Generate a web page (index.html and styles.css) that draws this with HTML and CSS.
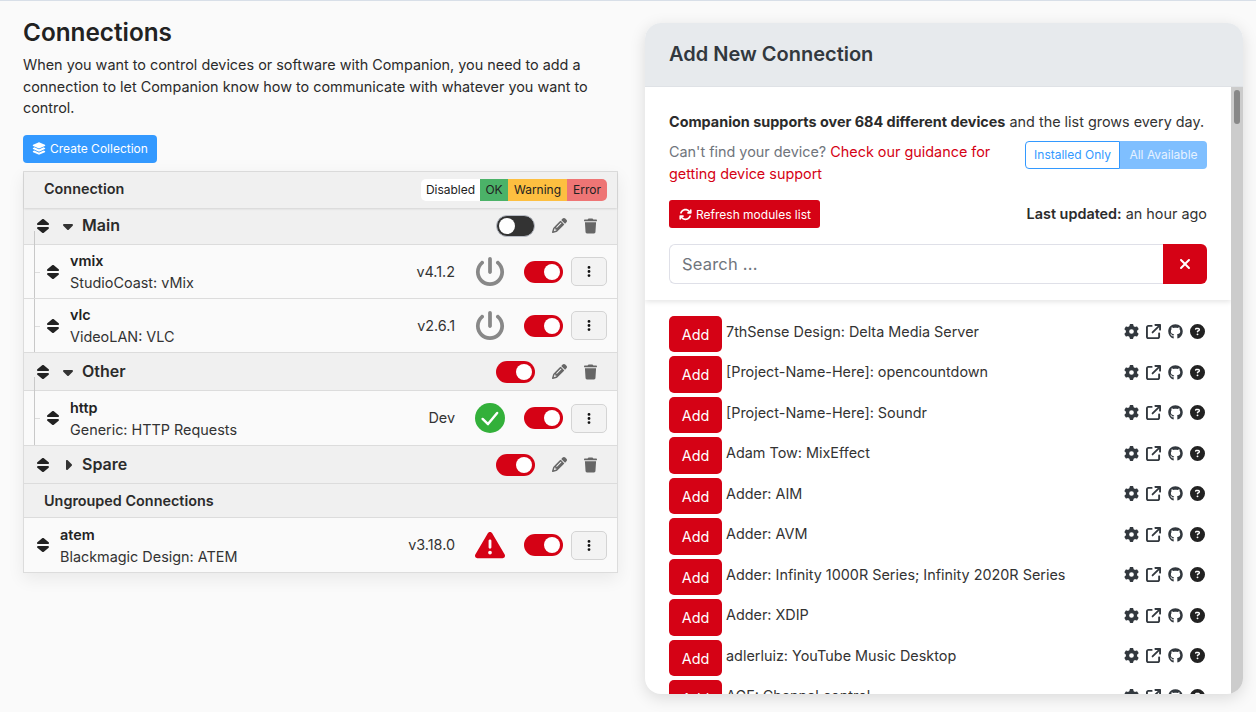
FILE: index.html
```html
<!DOCTYPE html>
<html lang="en">
<head>
  <meta charset="UTF-8">
  <title>Connections</title>
  <link rel="stylesheet" href="styles.css">
</head>
<body>
  <!-- icon sprite, used by every row below -->
  <svg class="sprite" xmlns="http://www.w3.org/2000/svg">
    <symbol id="i-sort" viewBox="0 0 320 512" preserveAspectRatio="none"><path d="M137.4 41.4c12.5-12.5 32.8-12.5 45.3 0l128 128c9.2 9.2 11.9 22.9 6.9 34.9s-16.6 19.8-29.6 19.8H32c-12.9 0-24.6-7.8-29.6-19.8s-2.2-25.7 6.9-34.9l128-128zm0 429.3l-128-128c-9.2-9.2-11.9-22.9-6.9-34.9s16.6-19.8 29.6-19.8H288c12.9 0 24.6 7.8 29.6 19.8s2.2 25.7-6.9 34.9l-128 128c-12.5 12.5-32.8 12.5-45.3 0z"/></symbol>
    <symbol id="i-down" viewBox="0 0 320 512"><path d="M137.4 374.6c12.5 12.5 32.8 12.5 45.3 0l128-128c9.2-9.2 11.9-22.9 6.9-34.9s-16.6-19.8-29.6-19.8L32 192c-12.9 0-24.6 7.8-29.6 19.8s-2.2 25.7 6.9 34.9l128 128z"/></symbol>
    <symbol id="i-right" viewBox="0 0 256 512"><path d="M246.6 278.6c12.5-12.5 12.5-32.8 0-45.3l-128-128c-9.2-9.2-22.9-11.9-34.9-6.9s-19.8 16.6-19.8 29.6l0 256c0 12.9 7.8 24.6 19.8 29.6s25.7 2.2 34.9-6.9l128-128z"/></symbol>
    <symbol id="i-pencil" viewBox="0 0 512 512"><path d="M410.3 231l11.3-11.3-33.9-33.9-62.1-62.1L291.7 89.8l-11.3 11.3-22.6 22.6L58.6 322.9c-10.4 10.4-18 23.3-22.2 37.4L1 480.7c-2.5 8.4-.2 17.5 6.1 23.7s15.3 8.5 23.7 6.1l120.3-35.4c14.1-4.2 27-11.8 37.4-22.2L387.7 253.7 410.3 231zM160 399.4l-9.1 22.7c-4 3.1-8.5 5.4-13.3 6.9L59.4 452l23-78.1c1.4-4.9 3.8-9.4 6.9-13.3l22.7-9.1v32c0 8.8 7.2 16 16 16h32zM362.7 18.7L348.3 33.2 325.7 55.8 314.3 67.1l33.9 33.9 62.1 62.1 33.9 33.9 11.3-11.3 22.6-22.6 14.5-14.5c25-25 25-65.5 0-90.5L453.3 18.7c-25-25-65.5-25-90.5 0zm-47.4 168l-144 144c-6.2 6.2-16.4 6.2-22.6 0s-6.2-16.4 0-22.6l144-144c6.2-6.2 16.4-6.2 22.6 0s6.2 16.4 0 22.6z"/></symbol>
    <symbol id="i-trash" viewBox="0 0 448 512"><path d="M135.2 17.7L128 32H32C14.3 32 0 46.3 0 64S14.3 96 32 96H416c17.7 0 32-14.3 32-32s-14.3-32-32-32H320l-7.2-14.3C307.4 6.8 296.3 0 284.2 0H163.8c-12.1 0-23.2 6.8-28.6 17.7zM416 128H32L53.2 467c1.6 25.3 22.6 45 47.9 45H346.9c25.3 0 46.3-19.7 47.9-45L416 128z"/></symbol>
    <symbol id="i-dots" viewBox="0 0 128 512"><path d="M64 360a56 56 0 1 0 0 112 56 56 0 1 0 0-112zm0-160a56 56 0 1 0 0 112 56 56 0 1 0 0-112zM120 96A56 56 0 1 0 8 96a56 56 0 1 0 112 0z"/></symbol>
    <symbol id="i-power" viewBox="0 0 512 512"><path d="M288 32c0-17.7-14.3-32-32-32s-32 14.3-32 32V256c0 17.7 14.3 32 32 32s32-14.3 32-32V32zM143.5 120.6c13.6-11.3 15.4-31.5 4.1-45.1s-31.5-15.4-45.1-4.1C49.7 115.4 16 181.8 16 256c0 132.5 107.5 240 240 240s240-107.5 240-240c0-74.2-33.8-140.6-86.6-184.6c-13.6-11.3-33.8-9.4-45.1 4.1s-9.4 33.8 4.1 45.1c38.9 32.3 63.5 81 63.5 135.4c0 97.2-78.8 176-176 176s-176-78.8-176-176c0-54.4 24.7-103.1 63.5-135.4z"/></symbol>
    <symbol id="i-check" viewBox="0 0 512 512"><circle cx="256" cy="256" r="256"/><path d="M130 272L222 360L378 170" fill="none" stroke="#fff" stroke-width="42" stroke-linecap="round" stroke-linejoin="round"/></symbol>
    <symbol id="i-warn" viewBox="0 0 512 512"><path d="M256 32c14.2 0 27.3 7.5 34.5 19.8l216 368c7.3 12.4 7.3 27.7 .2 40.1S486.3 480 472 480H40c-14.3 0-27.6-7.7-34.7-20.1s-7-27.8 .2-40.1l216-368C228.7 39.5 241.8 32 256 32zm0 128c-13.3 0-24 10.7-24 24V296c0 13.3 10.7 24 24 24s24-10.7 24-24V184c0-13.3-10.7-24-24-24zm32 224a32 32 0 1 0 -64 0 32 32 0 1 0 64 0z"/></symbol>
    <symbol id="i-gear" viewBox="0 0 512 512"><path d="M495.9 166.6c3.2 8.7 .5 18.4-6.4 24.6l-43.3 39.4c1.1 8.3 1.7 16.8 1.7 25.4s-.6 17.1-1.7 25.4l43.3 39.4c6.9 6.2 9.6 15.9 6.4 24.6c-4.4 11.9-9.7 23.3-15.8 34.3l-4.7 8.1c-6.6 11-14 21.4-22.1 31.2c-5.9 7.2-15.7 9.6-24.5 6.8l-55.7-17.7c-13.4 10.3-28.2 18.9-44 25.4l-12.5 57.1c-2 9.1-9 16.3-18.2 17.8c-13.8 2.3-28 3.5-42.5 3.5s-28.7-1.2-42.5-3.5c-9.2-1.5-16.2-8.7-18.2-17.8l-12.5-57.1c-15.8-6.5-30.6-15.1-44-25.4L83.1 425.9c-8.8 2.8-18.6 .3-24.5-6.8c-8.1-9.8-15.5-20.2-22.1-31.2l-4.7-8.1c-6.1-11-11.4-22.4-15.8-34.3c-3.2-8.7-.5-18.4 6.4-24.6l43.3-39.4C64.6 273.1 64 264.6 64 256s.6-17.1 1.7-25.4L22.4 191.2c-6.9-6.2-9.6-15.9-6.4-24.6c4.4-11.9 9.7-23.3 15.8-34.3l4.7-8.1c6.6-11 14-21.4 22.1-31.2c5.9-7.2 15.7-9.6 24.5-6.8l55.7 17.7c13.4-10.3 28.2-18.9 44-25.4l12.5-57.1c2-9.1 9-16.3 18.2-17.8C227.3 1.2 241.5 0 256 0s28.7 1.2 42.5 3.5c9.2 1.5 16.2 8.7 18.2 17.8l12.5 57.1c15.8 6.5 30.6 15.1 44 25.4l55.7-17.7c8.8-2.8 18.6-.3 24.5 6.8c8.1 9.8 15.5 20.2 22.1 31.2l4.7 8.1c6.1 11 11.4 22.4 15.8 34.3zM256 336a80 80 0 1 0 0-160 80 80 0 1 0 0 160z"/></symbol>
    <symbol id="i-link" viewBox="0 0 512 512"><path d="M320 0c-17.7 0-32 14.3-32 32s14.3 32 32 32h82.7L201.4 265.4c-12.5 12.5-12.5 32.8 0 45.3s32.8 12.5 45.3 0L448 109.3V192c0 17.7 14.3 32 32 32s32-14.3 32-32V32c0-17.7-14.3-32-32-32H320zM80 32C35.8 32 0 67.8 0 112V432c0 44.2 35.8 80 80 80H400c44.2 0 80-35.8 80-80V320c0-17.7-14.3-32-32-32s-32 14.3-32 32V432c0 8.8-7.2 16-16 16H80c-8.8 0-16-7.2-16-16V112c0-8.8 7.2-16 16-16H192c17.7 0 32-14.3 32-32s-14.3-32-32-32H80z"/></symbol>
    <symbol id="i-github" viewBox="0 0 496 512"><path d="M244.8 8C106.1 8 0 113.3 0 252c0 110.9 69.8 205.8 169.5 239.2 12.8 2.3 17.3-5.6 17.3-12.1 0-6.2-.3-40.4-.3-61.4 0 0-70 15-84.7-29.8 0 0-11.4-29.1-27.8-36.6 0 0-22.9-15.7 1.6-15.4 0 0 24.9 2 38.6 25.8 21.9 38.6 58.6 27.5 72.9 20.9 2.3-16 8.8-27.1 16-33.7-55.9-6.2-112.3-14.3-112.3-110.5 0-27.5 7.6-41.3 23.6-58.9-2.6-6.5-11.1-33.3 2.6-67.9 20.9-6.5 69 27 69 27 20-5.6 41.5-8.5 62.8-8.5s42.8 2.9 62.8 8.5c0 0 48.1-33.6 69-27 13.7 34.7 5.2 61.4 2.6 67.9 16 17.7 25.8 31.5 25.8 58.9 0 96.5-58.9 104.2-114.8 110.5 9.2 7.9 17 22.9 17 46.4 0 33.7-.3 75.4-.3 83.6 0 6.5 4.6 14.4 17.3 12.1C428.2 457.8 496 362.9 496 252 496 113.3 383.5 8 244.8 8z"/></symbol>
    <symbol id="i-help" viewBox="0 0 512 512"><path d="M256 512A256 256 0 1 0 256 0a256 256 0 1 0 0 512zM169.8 165.3c7.9-22.3 29.1-37.3 52.8-37.3h58.3c34.9 0 63.1 28.3 63.1 63.1c0 22.6-12.1 43.5-31.7 54.8L280 264.4c-.2 13-10.9 23.6-24 23.6c-13.3 0-24-10.7-24-24V250.5c0-8.6 4.6-16.5 12.1-20.8l44.3-25.4c4.7-2.7 7.6-7.7 7.6-13.1c0-8.4-6.8-15.1-15.1-15.1H222.6c-3.4 0-6.4 2.1-7.5 5.3l-.4 1.2c-4.4 12.5-18.2 19-30.6 14.6s-19-18.2-14.6-30.6l.4-1.2zM224 352a32 32 0 1 1 64 0 32 32 0 1 1 -64 0z"/></symbol>
    <symbol id="i-layers" viewBox="0 0 576 512"><path d="M264.5 5.2c14.9-6.9 32.1-6.9 47 0l218.6 101c8.5 3.9 13.9 12.4 13.9 21.8s-5.4 17.9-13.9 21.8l-218.6 101c-14.9 6.9-32.1 6.9-47 0L45.9 149.8C37.4 145.8 32 137.3 32 128s5.4-17.9 13.9-21.8L264.5 5.2zM476.9 209.6l53.2 24.6c8.5 3.9 13.9 12.4 13.9 21.8s-5.4 17.9-13.9 21.8l-218.6 101c-14.9 6.9-32.1 6.9-47 0L45.9 277.8C37.4 273.8 32 265.3 32 256s5.4-17.9 13.9-21.8l53.2-24.6 152 70.2c23.4 10.8 50.4 10.8 73.8 0l152-70.2zm-152 198.2l152-70.2 53.2 24.6c8.5 3.9 13.9 12.4 13.9 21.8s-5.4 17.9-13.9 21.8l-218.6 101c-14.9 6.9-32.1 6.9-47 0L45.9 405.8C37.4 401.8 32 393.3 32 384s5.4-17.9 13.9-21.8l53.2-24.6 152 70.2c23.4 10.8 50.4 10.8 73.8 0z"/></symbol>
    <symbol id="i-rotate" viewBox="0 0 512 512"><path d="M105.1 202.6c7.7-21.8 20.2-42.3 37.8-59.8c62.5-62.5 163.8-62.5 226.3 0L386.3 160H352c-17.7 0-32 14.3-32 32s14.3 32 32 32H463.5c0 0 0 0 0 0h.4c17.7 0 32-14.3 32-32V80c0-17.7-14.3-32-32-32s-32 14.3-32 32v35.2L414.4 97.6c-87.5-87.5-229.3-87.5-316.8 0C73.2 122 55.6 150.7 44.8 181.4c-5.9 16.7 2.9 34.9 19.5 40.8s34.9-2.9 40.8-19.5zM39 289.3c-5 1.5-9.8 4.2-13.7 8.2c-4 4-6.7 8.8-8.1 14c-.3 1.2-.6 2.5-.8 3.8c-.3 1.7-.4 3.4-.4 5.1V432c0 17.7 14.3 32 32 32s32-14.3 32-32V396.9l17.6 17.5 0 0c87.5 87.4 229.3 87.4 316.7 0c24.4-24.4 42.1-53.1 52.9-83.7c5.9-16.7-2.9-34.9-19.5-40.8s-34.9 2.9-40.8 19.5c-7.7 21.8-20.2 42.3-37.8 59.8c-62.5 62.5-163.8 62.5-226.3 0l-.1-.1L125.6 352H160c17.7 0 32-14.3 32-32s-14.3-32-32-32H48.4c-1.6 0-3.2 .1-4.8 .3s-3.1 .5-4.6 1z"/></symbol>
    <symbol id="i-x" viewBox="0 0 384 512"><path d="M342.6 150.6c12.5-12.5 12.5-32.8 0-45.3s-32.8-12.5-45.3 0L192 210.7 86.6 105.4c-12.5-12.5-32.8-12.5-45.3 0s-12.5 32.8 0 45.3L146.7 256 41.4 361.4c-12.5 12.5-12.5 32.8 0 45.3s32.8 12.5 45.3 0L192 301.3 297.4 406.6c12.5 12.5 32.8 12.5 45.3 0s12.5-32.8 0-45.3L237.3 256 342.6 150.6z"/></symbol>
  </svg>

  <div class="page">
    <main class="left">
      <h1>Connections</h1>
      <p class="intro">When you want to control devices or software with Companion, you need to add a connection to let Companion know how to communicate with whatever you want to control.</p>
      <button class="btn-create"><svg class="ic-layers"><use href="#i-layers"/></svg>Create Collection</button>

      <div class="table">
        <div class="table-head">
          <span>Connection</span>
          <div class="legend">
            <span class="lg-off">Disabled</span><span class="lg-ok">OK</span><span class="lg-warn">Warning</span><span class="lg-err">Error</span>
          </div>
        </div>

        <div class="group-row first">
          <svg class="ic-sort"><use href="#i-sort"/></svg>
          <svg class="ic-caret"><use href="#i-down"/></svg>
          <span class="group-name">Main</span>
          <span class="switch off"></span>
          <svg class="ic-edit"><use href="#i-pencil"/></svg>
          <svg class="ic-trash"><use href="#i-trash"/></svg>
        </div>
        <div class="group-items">
          <div class="item-row">
            <svg class="ic-sort"><use href="#i-sort"/></svg>
            <div class="item-text"><b>vmix</b><span>StudioCoast: vMix</span></div>
            <span class="version">v4.1.2</span>
            <svg class="ic-status grey"><use href="#i-power"/></svg>
            <span class="switch"></span>
            <button class="btn-more"><svg><use href="#i-dots"/></svg></button>
          </div>
          <div class="item-row">
            <svg class="ic-sort"><use href="#i-sort"/></svg>
            <div class="item-text"><b>vlc</b><span>VideoLAN: VLC</span></div>
            <span class="version">v2.6.1</span>
            <svg class="ic-status grey"><use href="#i-power"/></svg>
            <span class="switch"></span>
            <button class="btn-more"><svg><use href="#i-dots"/></svg></button>
          </div>
        </div>

        <div class="group-row">
          <svg class="ic-sort"><use href="#i-sort"/></svg>
          <svg class="ic-caret"><use href="#i-down"/></svg>
          <span class="group-name">Other</span>
          <span class="switch"></span>
          <svg class="ic-edit"><use href="#i-pencil"/></svg>
          <svg class="ic-trash"><use href="#i-trash"/></svg>
        </div>
        <div class="group-items">
          <div class="item-row tall">
            <svg class="ic-sort"><use href="#i-sort"/></svg>
            <div class="item-text"><b>http</b><span>Generic: HTTP Requests</span></div>
            <span class="version">Dev</span>
            <svg class="ic-status green"><use href="#i-check"/></svg>
            <span class="switch"></span>
            <button class="btn-more"><svg><use href="#i-dots"/></svg></button>
          </div>
        </div>

        <div class="group-row">
          <svg class="ic-sort"><use href="#i-sort"/></svg>
          <svg class="ic-caret closed"><use href="#i-right"/></svg>
          <span class="group-name">Spare</span>
          <span class="switch"></span>
          <svg class="ic-edit"><use href="#i-pencil"/></svg>
          <svg class="ic-trash"><use href="#i-trash"/></svg>
        </div>

        <div class="ungrouped">Ungrouped Connections</div>
        <div class="item-row flat">
          <svg class="ic-sort"><use href="#i-sort"/></svg>
          <div class="item-text"><b>atem</b><span>Blackmagic Design: ATEM</span></div>
          <span class="version">v3.18.0</span>
          <svg class="ic-status red"><use href="#i-warn"/></svg>
          <span class="switch"></span>
          <button class="btn-more"><svg><use href="#i-dots"/></svg></button>
        </div>
      </div>
    </main>

    <aside class="panel">
      <div class="panel-head">Add New Connection</div>
      <div class="panel-body">
        <div class="panel-scroll">
          <div class="panel-top">
            <p class="supports"><b>Companion supports over 684 different devices</b> and the list grows every day.</p>
            <div class="find-row">
              <p class="find">Can't find your device? <a href="#">Check our guidance for getting device support</a></p>
              <div class="filter">
                <span class="filter-on">Installed Only</span><span class="filter-off">All Available</span>
              </div>
            </div>
            <div class="refresh-row">
              <button class="btn-refresh"><svg><use href="#i-rotate"/></svg>Refresh modules list</button>
              <span><b>Last updated:</b> an hour ago</span>
            </div>
            <div class="search">
              <input type="text" placeholder="Search ...">
              <button><svg><use href="#i-x"/></svg></button>
            </div>
          </div>

          <ul class="modules">
            <li><button>Add</button><span class="mod-name">7thSense Design: Delta Media Server</span><span class="mod-icons"><svg class="gear"><use href="#i-gear"/></svg><svg><use href="#i-link"/></svg><svg><use href="#i-github"/></svg><svg><use href="#i-help"/></svg></span></li>
            <li><button>Add</button><span class="mod-name">[Project-Name-Here]: opencountdown</span><span class="mod-icons"><svg class="gear"><use href="#i-gear"/></svg><svg><use href="#i-link"/></svg><svg><use href="#i-github"/></svg><svg><use href="#i-help"/></svg></span></li>
            <li><button>Add</button><span class="mod-name">[Project-Name-Here]: Soundr</span><span class="mod-icons"><svg class="gear"><use href="#i-gear"/></svg><svg><use href="#i-link"/></svg><svg><use href="#i-github"/></svg><svg><use href="#i-help"/></svg></span></li>
            <li><button>Add</button><span class="mod-name">Adam Tow: MixEffect</span><span class="mod-icons"><svg class="gear"><use href="#i-gear"/></svg><svg><use href="#i-link"/></svg><svg><use href="#i-github"/></svg><svg><use href="#i-help"/></svg></span></li>
            <li><button>Add</button><span class="mod-name">Adder: AIM</span><span class="mod-icons"><svg class="gear"><use href="#i-gear"/></svg><svg><use href="#i-link"/></svg><svg><use href="#i-github"/></svg><svg><use href="#i-help"/></svg></span></li>
            <li><button>Add</button><span class="mod-name">Adder: AVM</span><span class="mod-icons"><svg class="gear"><use href="#i-gear"/></svg><svg><use href="#i-link"/></svg><svg><use href="#i-github"/></svg><svg><use href="#i-help"/></svg></span></li>
            <li><button>Add</button><span class="mod-name">Adder: Infinity 1000R Series; Infinity 2020R Series</span><span class="mod-icons"><svg class="gear"><use href="#i-gear"/></svg><svg><use href="#i-link"/></svg><svg><use href="#i-github"/></svg><svg><use href="#i-help"/></svg></span></li>
            <li><button>Add</button><span class="mod-name">Adder: XDIP</span><span class="mod-icons"><svg class="gear"><use href="#i-gear"/></svg><svg><use href="#i-link"/></svg><svg><use href="#i-github"/></svg><svg><use href="#i-help"/></svg></span></li>
            <li><button>Add</button><span class="mod-name">adlerluiz: YouTube Music Desktop</span><span class="mod-icons"><svg class="gear"><use href="#i-gear"/></svg><svg><use href="#i-link"/></svg><svg><use href="#i-github"/></svg><svg><use href="#i-help"/></svg></span></li>
            <li><button>Add</button><span class="mod-name">AGF: Channel control</span><span class="mod-icons"><svg class="gear"><use href="#i-gear"/></svg><svg><use href="#i-link"/></svg><svg><use href="#i-github"/></svg><svg><use href="#i-help"/></svg></span></li>
          </ul>
        </div>
        <div class="scrollbar"><div class="scrollbar-thumb"></div></div>
      </div>
    </aside>
  </div>
</body>
</html>
```

FILE: styles.css
```css
* {
  box-sizing: border-box;
}
html, body {
  height: 100%;
}
body {
  margin: 0;
  font-family: Inter, "Liberation Sans", sans-serif;
  font-size: 14.4px;
  line-height: 1.5;
  color: #2b2b2b;
  background-color: #fafafa;
  border-top: 1px solid #d8dfe8;
  overflow: hidden;
}
svg {
  fill: currentColor;
  display: block;
  flex: none;
}
button {
  font-family: inherit;
  cursor: pointer;
}
.sprite {
  display: none;
}
.page {
  display: grid;
  grid-template-columns: 595px 598px;
  column-gap: 27px;
  padding: 22px 13px 17px 23px;
  height: 711px;
}

/* left column */
h1 {
  margin: 0 0 12px;
  font-size: 24.3px;
  line-height: 18px;
  font-weight: 600;
  color: #222;
}
.intro {
  margin: 0 0 16.2px;
  padding-top: 1px;
}
.btn-create {
  display: flex;
  align-items: center;
  gap: 4px;
  height: 28px;
  padding: 0 9px 2px;
  background-color: #39f;
  color: #fff;
  border: none;
  border-radius: 4px;
  font-size: 12px;
}
.ic-layers {
  width: 14px;
  height: 13px;
}
.table {
  margin-top: 8px;
  border: 1px solid #dcdcdc;
  box-shadow: 0 6px 16px rgba(0, 0, 0, 0.07);
  background-color: #fafafa;
}
.table-head {
  display: flex;
  align-items: center;
  justify-content: space-between;
  height: 36px;
  padding: 0 10px 0 20px;
  background-color: #f0f0f0;
  font-weight: 600;
  box-shadow: 0 1px 2px rgba(0, 0, 0, 0.12);
  position: relative;
}
.table-head > span {
  margin-bottom: 2px;
}
.legend {
  display: flex;
  height: 22px;
  border-radius: 5px;
  overflow: hidden;
  font-size: 12px;
  font-weight: 400;
  line-height: 22px;
  text-align: center;
  color: #222;
}
.lg-off { width: 59px; background-color: #fff; }
.lg-ok { width: 28px; background-color: #4bb268; }
.lg-warn { width: 59px; background-color: #fdbf40; }
.lg-err { width: 40px; background-color: #ee7575; }

.group-row {
  display: flex;
  align-items: center;
  height: 38px;
  padding: 0 20px 0 13px;
  background-color: #f0f0f0;
  border-bottom: 1px solid #dcdcdc;
}
.group-row.first {
  height: 37px;
  padding-bottom: 1px;
}
.ic-sort {
  width: 12px;
  height: 16px;
  color: #222;
}
.ic-caret {
  width: 10px;
  height: 16px;
  margin-left: 14px;
  color: #333;
}
.ic-caret.closed {
  width: 8px;
  margin-left: 15px;
  margin-right: 1px;
}
.group-name {
  margin-left: 9px;
  margin-bottom: 2px;
  font-size: 16px;
  font-weight: 600;
  flex: 1;
}
.ic-edit {
  width: 15px;
  height: 15px;
  margin-left: 17px;
  color: #666;
}
.ic-trash {
  width: 13px;
  height: 16px;
  margin-left: 17px;
  color: #666;
}

.switch {
  display: block;
  position: relative;
  width: 39px;
  height: 22px;
  border-radius: 11px;
  background-color: #d50215;
  flex: none;
}
.switch::after {
  content: "";
  position: absolute;
  top: 3px;
  right: 3px;
  width: 16px;
  height: 16px;
  border-radius: 50%;
  background-color: #fff;
}
.switch.off {
  background-color: #333;
  border: 1px solid #b9bdc6;
}
.switch.off::after {
  top: 2px;
  left: 2px;
  right: auto;
}

.group-items {
  position: relative;
}
/* tree line down the side of a group */
.group-items::before {
  content: "";
  position: absolute;
  left: 10px;
  top: -14px;
  bottom: 0;
  width: 1px;
  background-color: #c8c8c8;
}
.item-row {
  display: flex;
  align-items: center;
  height: 54px;
  padding: 0 10px 0 23px;
  border-bottom: 1px solid #dcdcdc;
  position: relative;
}
.group-items .item-row::before {
  content: "";
  position: absolute;
  left: 11px;
  top: 50%;
  width: 5px;
  height: 1px;
  background-color: #ddd;
}
.item-row.tall {
  height: 55px;
}
.item-row.flat {
  padding-left: 13px;
  border-bottom: none;
}
.item-text {
  flex: 1;
  margin-left: 11px;
  padding-top: 1px;
}
.item-text b {
  display: block;
  font-weight: 600;
  color: #222;
}
.item-text span {
  display: block;
  color: #333;
}
.version {
  color: #333;
}
.ic-status {
  width: 30px;
  height: 30px;
  margin: 0 19px 0 20px;
}
.grey { color: #888; }
.green { color: #33b03a; }
.red { color: #d50215; }
.btn-more {
  display: flex;
  align-items: center;
  justify-content: center;
  width: 36px;
  height: 29px;
  margin-left: 8px;
  padding: 0;
  color: #111;
  background-color: #f3f3f3;
  border: 1px solid #d4d4d4;
  border-radius: 5px;
}
.btn-more svg {
  width: 4px;
  height: 13px;
}
.ungrouped {
  display: flex;
  align-items: center;
  height: 34px;
  padding-left: 20px;
  font-weight: 600;
  background-color: #f0f0f0;
  border-bottom: 1px solid #dcdcdc;
}

/* right panel */
.panel {
  display: flex;
  flex-direction: column;
  height: 671px;
  border-radius: 16px;
  overflow: hidden;
  background-color: #fff;
  box-shadow: 0 4px 16px rgba(0, 0, 0, 0.13);
}
.panel-head {
  flex: none;
  height: 64px;
  padding: 0 24px 2px;
  display: flex;
  align-items: center;
  font-size: 20px;
  font-weight: 600;
  color: #32383e;
  background-color: #e7eaed;
  border-bottom: 1px solid #dfe2e6;
}
.panel-body {
  flex: 1;
  display: flex;
  min-height: 0;
}
.panel-scroll {
  flex: 1;
  min-width: 0;
  overflow: hidden;
}
.scrollbar {
  flex: none;
  width: 12px;
  padding: 3px;
  background-color: #ccc;
}
.scrollbar-thumb {
  height: 34px;
  border-radius: 3px;
  background-color: #888;
}
.panel-top {
  padding: 24px 24px 16px;
  height: 213px;
  box-shadow: 0 2px 5px rgba(0, 0, 0, 0.1);
  position: relative;
}
.panel-top p {
  margin: 0;
}
.supports {
  color: #333;
  white-space: nowrap;
}
.supports b {
  font-weight: 700;
  color: #2b2b2b;
}
.refresh-row b {
  font-weight: 600;
  color: #2b2b2b;
}
.find-row {
  display: flex;
  justify-content: space-between;
  margin-top: 8.4px;
}
.find {
  width: 340px;
  color: #70757c;
}
.find a {
  color: #d50215;
  text-decoration: none;
}
.filter {
  display: flex;
  height: 28px;
  font-size: 12px;
  line-height: 26px;
  text-align: center;
}
.filter-on {
  width: 95px;
  color: #39f;
  background-color: #fff;
  border: 1px solid #39f;
  border-radius: 4px 0 0 4px;
}
.filter-off {
  width: 87px;
  padding-top: 1px;
  color: #e6f2ff;
  background-color: #7fbfff;
  border-radius: 0 4px 4px 0;
}
.refresh-row {
  display: flex;
  justify-content: space-between;
  align-items: center;
  margin-top: 15.8px;
  color: #333;
}
.btn-refresh {
  display: flex;
  align-items: center;
  gap: 4px;
  height: 28px;
  padding: 0 9px 0 10px;
  color: #fff;
  background-color: #d50215;
  border: none;
  border-radius: 3px;
  font-size: 12px;
}
.btn-refresh svg {
  width: 13px;
  height: 13px;
}
.search {
  display: flex;
  height: 40px;
  margin-top: 16px;
}
.search input {
  flex: 1;
  min-width: 0;
  padding: 0 12px;
  font-family: inherit;
  font-size: 16.5px;
  letter-spacing: 0.2px;
  color: #333;
  border: 1px solid #dfe0e8;
  border-right: none;
  border-radius: 6px 0 0 6px;
  outline: none;
}
.search input::placeholder {
  color: #70757c;
}
.search button {
  display: flex;
  align-items: center;
  justify-content: center;
  width: 44px;
  padding: 0;
  color: #fff;
  background-color: #d50215;
  border: none;
  border-radius: 0 6px 6px 0;
}
.search button svg {
  width: 12px;
  height: 16px;
}
.modules {
  list-style: none;
  margin: 0;
  padding: 15.75px 24px 0;
}
.modules li {
  display: flex;
  align-items: flex-start;
  height: 40.5px;
}
.modules button {
  width: 53px;
  height: 36.5px;
  padding: 0;
  color: #fff;
  font-size: 14.4px;
  background-color: #d50215;
  border: none;
  border-radius: 5px;
}
.mod-name {
  flex: 1;
  margin-left: 4px;
  padding-top: 5px;
  color: #333;
}
.mod-icons {
  display: flex;
  gap: 7px;
  margin: 8.25px 2px 0 0;
  color: #32383e;
}
.mod-icons svg {
  width: 15px;
  height: 15px;
}
.mod-icons svg:last-child {
  color: #222;
}
```
